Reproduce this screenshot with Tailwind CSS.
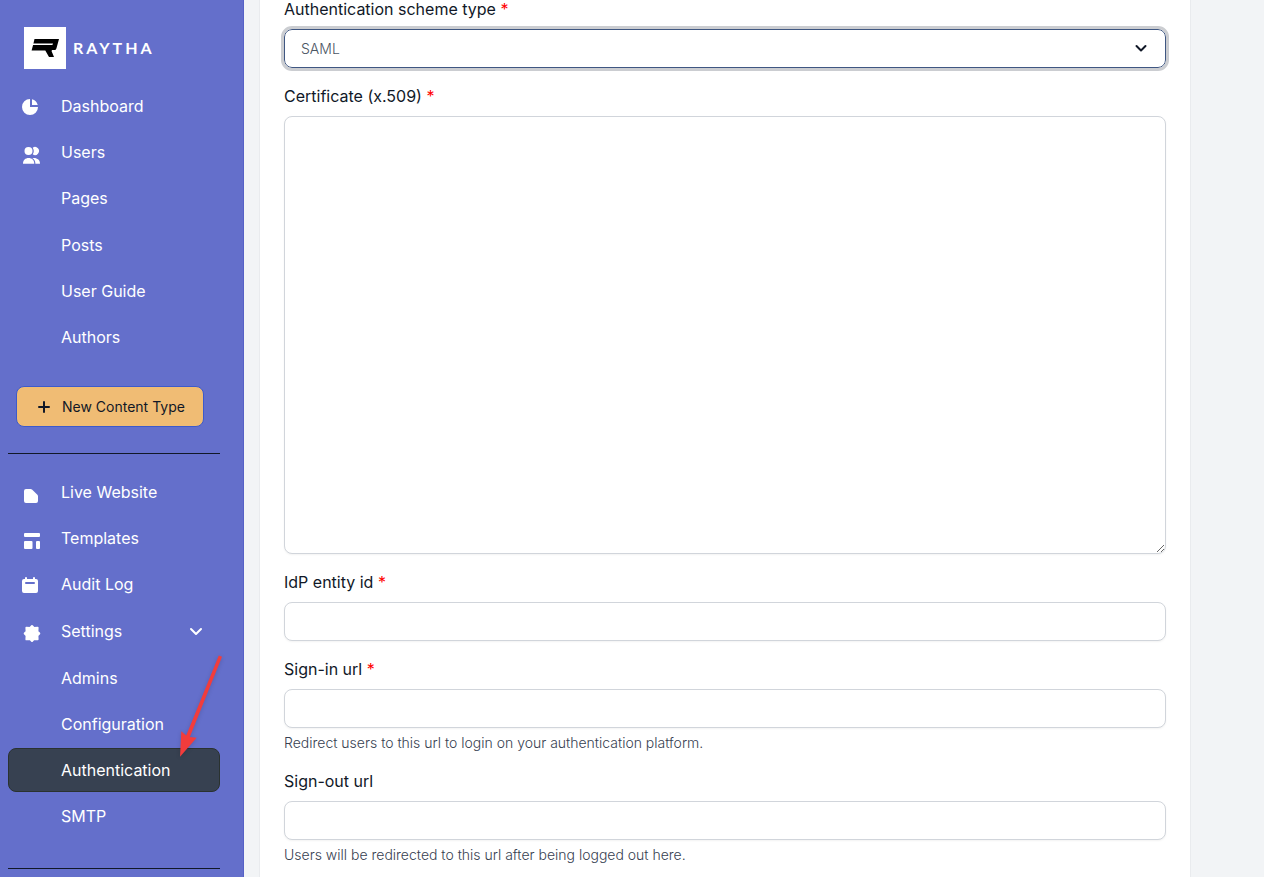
<!DOCTYPE html>
<html lang="en">
<head>
<meta charset="utf-8">
<meta name="viewport" content="width=device-width, initial-scale=1">
<title>Raytha - Authentication</title>
<script src="https://cdn.jsdelivr.net/npm/@tailwindcss/browser@4"></script>
</head>
<body class="flex h-screen overflow-hidden bg-[#f2f4f6] font-['Inter',sans-serif] text-base text-[#111827]">
<aside class="relative w-[244px] shrink-0 overflow-hidden border-r border-[#5661c6] bg-[#646fcb] pl-2 pr-[23px] text-white">
  <a href="#" class="ml-4 mt-[27px] flex items-center" aria-label="Raytha">
    <svg class="h-[42px] w-[42px]" viewBox="0 0 42 42" aria-hidden="true"><path fill="#fff" d="M0 0h42v42H0z"/><path fill="#000" d="M10.500 12H35l-2.600 9.500-1 1.500h-3.300l-.6 1 2.500 6h-5l-3.700-6.500H7.600l1.400-5.300z"/><path fill="#fff" d="M9 16.500h20l-.6 1.600H8.500z"/></svg>
    <span class="ml-[7px] font-['Lato',sans-serif] text-base font-bold tracking-[3px]">RAYTHA</span>
  </a>
  <nav aria-label="Content" class="mt-[15px]">
    <ul class="flex flex-col gap-[2px]">
      <li><a href="#" class="flex h-11 items-center px-3"><span class="w-[41px] pt-[2px]"><svg class="h-5 w-5" viewBox="0 0 20 20" fill="currentColor" aria-hidden="true"><path d="M2 10a8 8 0 018-8v8h8a8 8 0 11-16 0z"/><path d="M12 2.252A8.014 8.014 0 0117.748 8H12V2.252z"/></svg></span>Dashboard</a></li>
      <li><a href="#" class="flex h-11 items-center px-3"><span class="w-[41px] pt-[2px]"><svg class="h-6 w-6" viewBox="0 0 24 24" fill="currentColor" aria-hidden="true"><circle cx="8.500" cy="10" r="4"/><path d="M12.700 6.700a4 4 0 1 1 0 6.600 6 6 0 0 0 0-6.600z"/><path d="M3 22.700c0-3.600 2.400-5.700 5.600-5.700s5.700 2.100 5.700 5.700zM12.300 17.100c4.500-.7 7.700 1.600 7.700 5.600h-4.600c0-2.700-1.200-4.500-3.100-5.600z"/></svg></span>Users</a></li>
      <li>
        <ul class="flex flex-col gap-[2px] pb-px">
          <li><a href="#" class="flex h-11 items-center pl-[53px]">Pages</a></li>
          <li class="pt-px"><a href="#" class="flex h-11 items-center pl-[53px]">Posts</a></li>
          <li><a href="#" class="flex h-11 items-center pl-[53px]">User Guide</a></li>
          <li><a href="#" class="flex h-11 items-center pl-[53px]">Authors</a></li>
        </ul>
      </li>
    </ul>
  </nav>
  <button type="button" class="ml-2 mt-[26px] flex h-[41px] w-[188px] items-center rounded-lg border border-[#3d5acb] bg-[#f0bc74] pl-[21px] text-sm text-[#111827]">
    <svg class="mr-3 h-3 w-3" viewBox="0 0 12 12" fill="none" stroke="currentColor" stroke-width="2" stroke-linecap="round" aria-hidden="true"><path d="M6 1v10M1 6h10"/></svg>
    New Content Type
  </button>
  <hr class="mt-[26px] border-[#111827]">
  <nav aria-label="Site" class="mt-4">
    <ul class="flex flex-col gap-[2px]">
      <li><a href="#" class="flex h-11 items-center px-3"><span class="w-[41px] pt-[2px]"><svg class="h-6 w-6" viewBox="0 0 24 24" fill="currentColor" aria-hidden="true"><path d="M6 8h4.600a2 2 0 0 1 1.400.6l5.400 5.200a2 2 0 0 1 .6 1.400V20a2 2 0 0 1-2 2H6a2 2 0 0 1-2-2V10a2 2 0 0 1 2-2z"/></svg></span>Live Website</a></li>
      <li><a href="#" class="flex h-11 items-center px-3"><span class="w-[41px] pt-[2px]"><svg class="h-6 w-6" viewBox="0 0 24 24" fill="currentColor" aria-hidden="true"><rect x="4" y="6" width="16" height="4" rx="1"/><rect x="4" y="14" width="8.500" height="8" rx="1"/><rect x="16" y="14" width="4" height="8" rx="1"/></svg></span>Templates</a></li>
      <li><a href="#" class="flex h-11 items-center px-3"><span class="w-[41px] pt-[2px]"><svg class="h-5 w-5" viewBox="0 0 20 20" fill="currentColor" aria-hidden="true"><path fill-rule="evenodd" d="M6 2a1 1 0 00-1 1v1H4a2 2 0 00-2 2v10a2 2 0 002 2h12a2 2 0 002-2V6a2 2 0 00-2-2h-1V3a1 1 0 10-2 0v1H7V3a1 1 0 00-1-1zm0 5a1 1 0 000 2h8a1 1 0 100-2H6z"/></svg></span>Audit Log</a></li>
      <li>
        <button type="button" aria-expanded="true" class="flex h-[46px] w-full items-center px-3 text-left"><span class="w-[41px] pt-[2px]"><svg class="h-6 w-6" viewBox="0 0 24 24" fill="currentColor" stroke="currentColor" stroke-width="2" stroke-linejoin="round" aria-hidden="true"><path d="M12 6l1.800 2 3.800-.3-.2 3.800 1.900 2-1.900 2 .2 3.800-3.800-.3L12 21l-1.800-2-3.800.3.200-3.800-1.900-2 1.900-2-.2-3.800 3.800.3z"/></svg></span>Settings
          <svg class="ml-auto mr-[5px] h-[14px] w-[14px]" viewBox="0 0 14 14" fill="none" stroke="currentColor" stroke-width="2" stroke-linecap="round" stroke-linejoin="round" aria-hidden="true"><path d="M2 5l5 5 5-5"/></svg></button>
        <ul class="mt-[2px] flex flex-col gap-[2px]">
          <li><a href="#" class="flex h-11 items-center pl-[53px]">Admins</a></li>
          <li><a href="#" class="flex h-11 items-center pl-[53px]">Configuration</a></li>
          <li><a href="#" aria-current="page" class="flex h-11 items-center rounded-lg border border-[#2a3230] bg-[#374151] pl-[52px]">Authentication</a></li>
          <li><a href="#" class="flex h-11 items-center pl-[53px]">SMTP</a></li>
        </ul>
      </li>
    </ul>
  </nav>
  <hr class="mt-[30px] border-[#111827]">
  <svg class="pointer-events-none absolute left-[176px] top-[652px] h-[108px] w-[50px] drop-shadow-sm" viewBox="0 0 50 108" fill="#f23c3c" aria-hidden="true"><path d="M42.800 3.500l3.200 1.300-32.200 80.200 6.900.8L4 104.700l1.300-25.400 4.900 4.200z"/></svg>
</aside>
<main class="min-w-0 flex-1 pl-[15px] pr-[73px]">
  <form class="flex h-full flex-col border-x border-[#e9ebee] bg-white px-6">
    <div class="-mt-[3px] mb-4">
      <label for="scheme" class="mb-2 block">Authentication scheme type <span class="text-[#ff0000]">*</span></label>
      <div class="relative">
        <select id="scheme" class="block h-[39px] w-full appearance-none rounded-lg border border-[#3f5782] bg-white px-4 text-sm font-light text-[#4b5563] outline-3 outline-[#cbcdd1]"><option>SAML</option></select>
        <svg class="pointer-events-none absolute right-[18px] top-3 h-[14px] w-[14px]" viewBox="0 0 14 14" fill="none" stroke="#111827" stroke-width="2" stroke-linecap="round" stroke-linejoin="round" aria-hidden="true"><path d="M2.500 5l4.500 4.500L11.500 5"/></svg>
      </div>
    </div>
    <div class="mb-4">
      <label for="cert" class="mb-2 block">Certificate (x.509) <span class="text-[#ff0000]">*</span></label>
      <textarea id="cert" class="block h-[438px] w-full rounded-lg border border-[#d1d5db] bg-white px-4 py-2 text-sm shadow-xs"></textarea>
    </div>
    <div class="mb-4">
      <label for="idp" class="mb-2 block">IdP entity id <span class="text-[#ff0000]">*</span></label>
      <input id="idp" type="text" class="block h-[39px] w-full rounded-lg border border-[#d1d5db] bg-white px-4 text-sm shadow-xs">
    </div>
    <div class="mb-4">
      <label for="signin" class="mb-2 block">Sign-in url <span class="text-[#ff0000]">*</span></label>
      <input id="signin" type="text" aria-describedby="signin-help" class="block h-[39px] w-full rounded-lg border border-[#d1d5db] bg-white px-4 text-sm shadow-xs">
      <p id="signin-help" class="mt-[5px] text-sm font-light text-[#374151]">Redirect users to this url to login on your authentication platform.</p>
    </div>
    <div class="mb-4">
      <label for="signout" class="mb-2 block">Sign-out url</label>
      <input id="signout" type="text" aria-describedby="signout-help" class="block h-[39px] w-full rounded-lg border border-[#d1d5db] bg-white px-4 text-sm shadow-xs">
      <p id="signout-help" class="mt-[5px] text-sm font-light text-[#374151]">Users will be redirected to this url after being logged out here.</p>
    </div>
  </form>
</main>
</body>
</html>
